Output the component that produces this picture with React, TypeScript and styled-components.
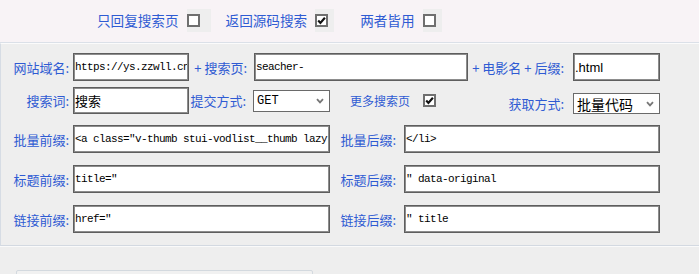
import React from 'react';
import styled, { createGlobalStyle } from 'styled-components';

const Global = createGlobalStyle`
  html, body { margin: 0; padding: 0; background: #eeeeee; }
  body { font-family: "Noto Sans CJK SC", "Liberation Sans", sans-serif; overflow: hidden; }
  #root { width: 699px; height: 274px; overflow: hidden; }
`;

const BLUE = '#2f5bd3';

const TopBar = styled.div`
  height: 42px;
  box-sizing: content-box;
  background: #f8f3f6;
  border-bottom: 1px solid #dbe0e8;
  display: flex;
  align-items: center;
  padding-left: 97px;
`;

const TopItem = styled.label<{ $after: number }>`
  display: flex;
  align-items: center;
  margin-right: ${p => p.$after}px;
  color: ${BLUE};
  font-size: 13.6px;
  line-height: 1;
`;

const TopText = styled.span`
  margin-right: 8px;
  margin-top: -1px;
`;

const CheckPad = styled.span<{ $w: number }>`
  display: flex;
  align-items: center;
  width: ${p => p.$w}px;
  height: 23px;
  background: #eeeeee;
  margin-top: -1px;
`;

const Box = styled.span`
  width: 13px;
  height: 13px;
  flex: none;
  box-sizing: border-box;
  border: 2px solid #6f6f6f;
  background: #ffffff;
  display: flex;
  align-items: center;
  justify-content: center;
`;

const Check: React.FC<{ on?: boolean }> = ({ on }) => (
  <Box>
    {on && (
      <svg width="9" height="9" viewBox="0 0 9 9">
        <path d="M1.2 4.6 L3.4 6.9 L7.9 1.8" fill="none" stroke="#111" strokeWidth="2.2" strokeLinejoin="miter" />
      </svg>
    )}
  </Box>
);

const Panel = styled.div`
  background: #eeeeee;
  border-top: 1px solid #fbfbfb;
  border-left: 1px solid #d6dce4;
  border-bottom: 1px solid #d3d9e1;
  padding: 9px 0 14px 0;
  height: 203px;
  box-sizing: border-box;
`;

const Row = styled.div<{ $h: number; $mt: number }>`
  display: flex;
  align-items: center;
  height: ${p => p.$h}px;
  margin-top: ${p => p.$mt}px;
`;

const Label = styled.span<{ $w: number; $pr: number; $size?: number; $left?: boolean }>`
  width: ${p => p.$w}px;
  padding-right: ${p => p.$pr}px;
  box-sizing: border-box;
  flex: none;
  text-align: ${p => (p.$left ? 'left' : 'right')};
  color: ${BLUE};
  font-size: ${p => p.$size ?? 13}px;
  line-height: 1;
  white-space: nowrap;
`;

const Field = styled.input<{ $w: number; $h: number; $font?: 'mono' | 'sans' | 'cjk' }>`
  width: ${p => p.$w}px;
  height: ${p => p.$h}px;
  flex: none;
  box-sizing: border-box;
  margin: 0;
  border: 1px solid #5e5e5e;
  box-shadow: inset 0 0 0 1px #8d8d8d;
  border-radius: 0;
  outline: none;
  background: #ffffff;
  padding: 0 1px;
  color: #000;
  font-family: ${p =>
    p.$font === 'sans'
      ? '"Liberation Sans", sans-serif'
      : p.$font === 'cjk'
      ? '"Noto Sans CJK SC", sans-serif'
      : '"Liberation Mono", "Noto Sans CJK SC", monospace'};
  font-size: ${p => (p.$font === 'sans' ? 13 : p.$font === 'cjk' ? 13 : 11)}px;
  letter-spacing: ${p => (p.$font === 'mono' || !p.$font ? '-0.6px' : '0')};
`;

const SelectBox = styled.div<{ $w: number; $h: number; $size: number }>`
  width: ${p => p.$w}px;
  height: ${p => p.$h}px;
  flex: none;
  box-sizing: border-box;
  border: 1px solid #6a6a6a;
  background: #ffffff;
  display: flex;
  align-items: center;
  justify-content: space-between;
  padding: 0 5px 0 3px;
  color: #000;
  font-size: ${p => p.$size}px;
  font-family: ${p => (p.$size > 13 ? '"Noto Sans CJK SC", sans-serif' : '"Liberation Mono", monospace')};
`;

const Chevron = () => (
  <svg width="8" height="6" viewBox="0 0 8 6">
    <path d="M1 1.2 L4 4.4 L7 1.2" fill="none" stroke="#777" strokeWidth="1.8" />
  </svg>
);

const BottomGroup = styled.div`
  display: flex;
  align-items: center;
  align-self: flex-end;
  height: 21px;
`;

const Gap = styled.span<{ $w: number }>`
  width: ${p => p.$w}px;
  flex: none;
`;

const Footer = styled.div`
  border-top: 1px solid #fafafa;
  padding: 23px 0 0 16px;
`;

const Pane = styled.div`
  width: 295px;
  height: 20px;
  border: 1px solid #d3d9df;
  border-radius: 2px;
  background: #f1f1f1;
`;

const pairs = [
  ['批量前缀:', '<a class="v-thumb stui-vodlist__thumb lazyload', '批量后缀:', '</li>'],
  ['标题前缀:', 'title="', '标题后缀:', '" data-original'],
  ['链接前缀:', 'href="', '链接后缀:', '" title'],
];

export default function App() {
  return (
    <>
      <Global />
      <TopBar>
        <TopItem $after={15}>
          <TopText>只回复搜索页</TopText>
          <CheckPad $w={24}><Check /></CheckPad>
        </TopItem>
        <TopItem $after={26}>
          <TopText>返回源码搜索</TopText>
          <CheckPad $w={19}><Check on /></CheckPad>
        </TopItem>
        <TopItem $after={0}>
          <TopText>两者皆用</TopText>
          <CheckPad $w={19}><Check /></CheckPad>
        </TopItem>
      </TopBar>
      <Panel>
        <Row $h={28} $mt={0}>
          <Label $w={72} $pr={4}>网站域名:</Label>
          <Field $w={116} $h={28} readOnly value="https://ys.zzwll.cn" />
          <Label $w={65} $pr={7}>+ 搜索页:</Label>
          <Field $w={214} $h={28} readOnly value="seacher-" />
          <Label $w={105} $pr={9}>+ 电影名 + 后缀:</Label>
          <Field $w={87} $h={28} $font="sans" readOnly value=".html" />
        </Row>
        <Row $h={27} $mt={6}>
          <Label $w={72} $pr={4}>搜索词:</Label>
          <Field $w={116} $h={27} $font="cjk" readOnly value="搜索" />
          <Label $w={64} $pr={7}>提交方式:</Label>
          <SelectBox $w={77} $h={22} $size={12}>
            <span>GET</span>
            <Chevron />
          </SelectBox>
          <Gap $w={20} />
          <Label $w={73} $pr={0} $size={12} $left>更多搜索页</Label>
          <Check on />
          <BottomGroup>
            <Label $w={137} $pr={9}>获取方式:</Label>
            <SelectBox $w={87} $h={21} $size={14}>
              <span>批量代码</span>
              <Chevron />
            </SelectBox>
          </BottomGroup>
        </Row>
        {pairs.map(([l1, v1, l2, v2], i) => (
          <Row key={l1} $h={28} $mt={i === 0 ? 11 : 12}>
            <Label $w={72} $pr={4}>{l1}</Label>
            <Field $w={257} $h={28} readOnly value={v1} />
            <Label $w={74} $pr={8}>{l2}</Label>
            <Field $w={256} $h={28} readOnly value={v2} />
          </Row>
        ))}
      </Panel>
      <Footer>
        <Pane />
      </Footer>
    </>
  );
}
